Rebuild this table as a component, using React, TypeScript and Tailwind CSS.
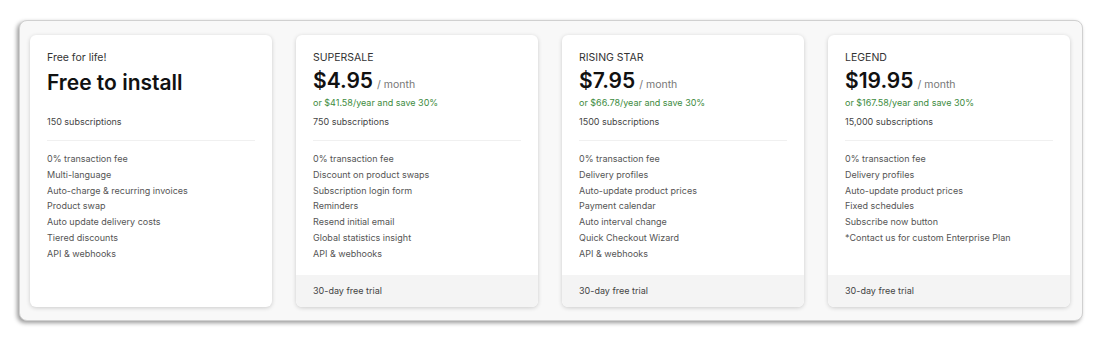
const plans = [
  {
    id: "free",
    label: "Free for life!",
    title: "Free to install",
    subs: "150 subscriptions",
    features: [
      "0% transaction fee",
      "Multi-language",
      "Auto-charge & recurring invoices",
      "Product swap",
      "Auto update delivery costs",
      "Tiered discounts",
      "API & webhooks",
    ],
  },
  {
    id: "supersale",
    label: "SUPERSALE",
    price: "$4.95",
    yearly: "or $41.58/year and save 30%",
    subs: "750 subscriptions",
    features: [
      "0% transaction fee",
      "Discount on product swaps",
      "Subscription login form",
      "Reminders",
      "Resend initial email",
      "Global statistics insight",
      "API & webhooks",
    ],
    trial: "30-day free trial",
  },
  {
    id: "rising",
    label: "RISING STAR",
    price: "$7.95",
    yearly: "or $66.78/year and save 30%",
    subs: "1500 subscriptions",
    features: [
      "0% transaction fee",
      "Delivery profiles",
      "Auto-update product prices",
      "Payment calendar",
      "Auto interval change",
      "Quick Checkout Wizard",
      "API & webhooks",
    ],
    trial: "30-day free trial",
  },
  {
    id: "legend",
    label: "LEGEND",
    price: "$19.95",
    yearly: "or $167.58/year and save 30%",
    subs: "15,000 subscriptions",
    features: [
      "0% transaction fee",
      "Delivery profiles",
      "Auto-update product prices",
      "Fixed schedules",
      "Subscribe now button",
      "*Contact us for custom Enterprise Plan",
    ],
    trial: "30-day free trial",
  },
];

type Plan = (typeof plans)[number] & { title?: string; price?: string; yearly?: string; trial?: string };

function PlanCard({ plan }: { plan: Plan }) {
  return (
    <div className="flex flex-col h-[272px] bg-white rounded-[6px] shadow-[0_1px_4px_rgba(0,0,0,0.18)] overflow-hidden">
      <div className="flex-1 px-[17px] pt-[16px]">
        <div className="text-[10.5px] leading-[14px] text-[#333]">{plan.label}</div>

        {/* header: title or price, fixed height so the rows line up */}
        {plan.title ? (
          <div className="h-[49px] pt-[4px]">
            <div className="text-[21px] leading-[28px] font-semibold text-[#111]">{plan.title}</div>
          </div>
        ) : (
          <div className="h-[49px] pt-[2px]">
            <div className="h-[28px] leading-[28px] whitespace-nowrap">
              <span className="text-[21px] font-semibold text-[#111]">{plan.price}</span>
              <span className="ml-[4px] text-[10.5px] leading-none text-[#777]">/ month</span>
            </div>
            <div className="text-[9px] leading-[16px] text-[#3d8b40]">{plan.yearly}</div>
          </div>
        )}
        <div className="text-[9px] leading-[16px] text-[#444]">{plan.subs}</div>

        <div className="mt-[10px] border-t border-[#f0f0f0]" />

        <ul className="mt-[10px] flex flex-col">
          {plan.features.map((f) => (
            <li key={f} className="text-[9px] leading-[15.8px] text-[#555]">
              {f}
            </li>
          ))}
        </ul>
      </div>
      {plan.trial && (
        <div className="h-[32px] flex items-center px-[17px] bg-[#f4f4f4] text-[9px] text-[#444]">{plan.trial}</div>
      )}
    </div>
  );
}

export default function App() {
  return (
    <div className="w-[1100px] h-[338px] bg-white pt-[20px] pl-[19px]" style={{ fontFamily: "Inter, 'Noto Sans', sans-serif" }}>
      <div className="w-[1064px] h-[301px] bg-[#f8f8f8] rounded-[8px] border border-[#d0d0d0] shadow-[-2px_2px_4px_rgba(0,0,0,0.4)] pt-[14px] pl-[10px]">
        <div className="grid grid-cols-[repeat(4,242px)] gap-[24px]">
          {plans.map((p) => (
            <PlanCard key={p.id} plan={p as Plan} />
          ))}
        </div>
      </div>
    </div>
  );
}
